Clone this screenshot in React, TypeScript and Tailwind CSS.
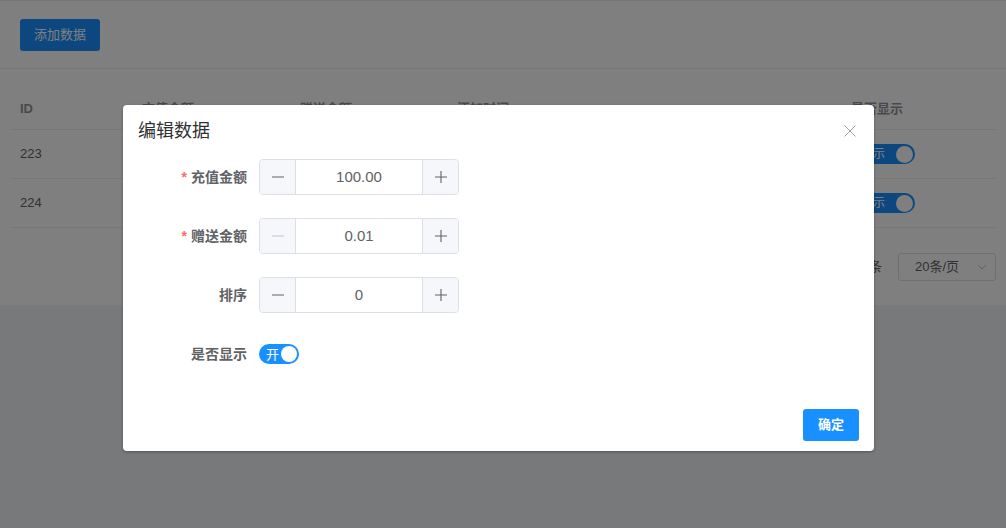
import React from "react";

const font = { fontFamily: '"Liberation Sans", "Noto Sans CJK SC", sans-serif' };

function NumberInput({ value, minusDisabled }: { value: string; minusDisabled?: boolean }) {
  return (
    <div className="flex h-[36px] w-[200px] rounded-[4px] border border-[#dcdfe6] overflow-hidden">
      <div className={`flex w-[36px] items-center justify-center bg-[#f5f7fa] border-r border-[#dcdfe6] ${minusDisabled ? "text-[#c0c4cc]" : "text-[#606266]"}`}>
        <svg width="14" height="14" viewBox="0 0 14 14"><path d="M1 7h12" stroke="currentColor" strokeWidth="1.1" /></svg>
      </div>
      <div className="flex flex-1 items-center justify-center text-[15px] text-[#606266]">{value}</div>
      <div className="flex w-[36px] items-center justify-center bg-[#f5f7fa] border-l border-[#dcdfe6] text-[#606266]">
        <svg width="14" height="14" viewBox="0 0 14 14"><path d="M1 7h12M7 1v12" stroke="currentColor" strokeWidth="1.1" /></svg>
      </div>
    </div>
  );
}

function FormRow({ label, required, children }: { label: string; required?: boolean; children: React.ReactNode }) {
  return (
    <div className="flex h-[36px] items-center mb-[23px]">
      <div className="w-[121px] pr-[12px] text-right text-[14px] font-bold text-[#606266]">
        {required && <span className="text-[#f56c6c] mr-[4px]">*</span>}
        {label}
      </div>
      {children}
    </div>
  );
}

export default function App() {
  return (
    <div className="relative h-[528px] w-[1006px] overflow-hidden bg-[#f0f2f5]" style={font}>
      {/* page */}
      <div className="border-t border-[#e8e8e8] bg-white h-[69px] border-b border-b-[#ebeef5] px-[20px] pt-[18px]">
        <div className="flex h-[32px] w-[80px] items-center justify-center rounded-[3px] bg-[#1890ff] text-[13px] text-white">添加数据</div>
      </div>
      <div className="bg-white h-[236px] px-[10px] pt-[20px]">
        <div className="flex h-[41px] items-center border-b border-[#ebeef5] text-[13px] font-bold text-[#909399]">
          <div className="w-[122px] pl-[10px]">ID</div>
          <div className="w-[158px] pl-[10px]">充值金额</div>
          <div className="w-[157px] pl-[10px]">赠送金额</div>
          <div className="w-[394px] pl-[10px]">添加时间</div>
          <div className="pl-[10px]">是否显示</div>
        </div>
        {["223", "224"].map((id) => (
          <div key={id} className="flex h-[49px] items-center border-b border-[#ebeef5] text-[13px] text-[#606266]">
            <div className="w-[122px] pl-[10px]">{id}</div>
            <div className="w-[158px] pl-[10px]">100.00</div>
            <div className="w-[157px] pl-[10px]">0.01</div>
            <div className="w-[394px] pl-[10px]">2023-01-01</div>
            <div className="pl-[10px]">
              <div className="flex h-[20px] w-[64px] items-center justify-between rounded-full bg-[#1890ff] pl-[10px] pr-[2px] text-[12px] text-white">
                <span>显示</span>
                <span className="h-[17px] w-[17px] rounded-full bg-white" />
              </div>
            </div>
          </div>
        ))}
        <div className="flex items-center justify-end pt-[25px] text-[13px] text-[#606266]">
          <span className="mr-[16px]">共 2 条</span>
          <div className="flex h-[28px] w-[98px] items-center justify-between rounded-[3px] border border-[#dcdfe6] pl-[16px] pr-[8px]">
            <span>20条/页</span>
            <svg width="10" height="10" viewBox="0 0 10 10"><path d="M1 3l4 4 4-4" fill="none" stroke="#c0c4cc" strokeWidth="1" /></svg>
          </div>
        </div>
      </div>

      {/* overlay */}
      <div className="absolute inset-0 bg-black/50" />

      {/* dialog */}
      <div className="absolute left-[123px] top-[105px] w-[751px] h-[346px] rounded-[4px] bg-white shadow-[0_1px_3px_rgba(0,0,0,0.3)]">
        <div className="flex h-[50px] items-center justify-between pl-[15px] pr-[18px] pt-[2px]">
          <span className="text-[18px] text-[#303133]">编辑数据</span>
          <svg width="12" height="12" viewBox="0 0 12 12"><path d="M0.5 0.5l11 11M11.5 0.5l-11 11" stroke="#a0a3a9" strokeWidth="1" /></svg>
        </div>
        <div className="pl-[15px] pt-[4px]">
          <FormRow label="充值金额" required>
            <NumberInput value="100.00" />
          </FormRow>
          <FormRow label="赠送金额" required>
            <NumberInput value="0.01" minusDisabled />
          </FormRow>
          <FormRow label="排序">
            <NumberInput value="0" />
          </FormRow>
          <FormRow label="是否显示">
            <div className="flex h-[20px] w-[40px] items-center justify-between rounded-full bg-[#1890ff] pl-[7px] pr-[2px] text-[13px] text-white">
              <span className="leading-none">开</span>
              <span className="h-[16px] w-[16px] rounded-full bg-white" />
            </div>
          </FormRow>
        </div>
        <div className="absolute bottom-[10px] right-[15px] flex h-[32px] w-[56px] items-center justify-center rounded-[3px] bg-[#1890ff] text-[13px] font-bold text-white">确定</div>
      </div>
    </div>
  );
}
